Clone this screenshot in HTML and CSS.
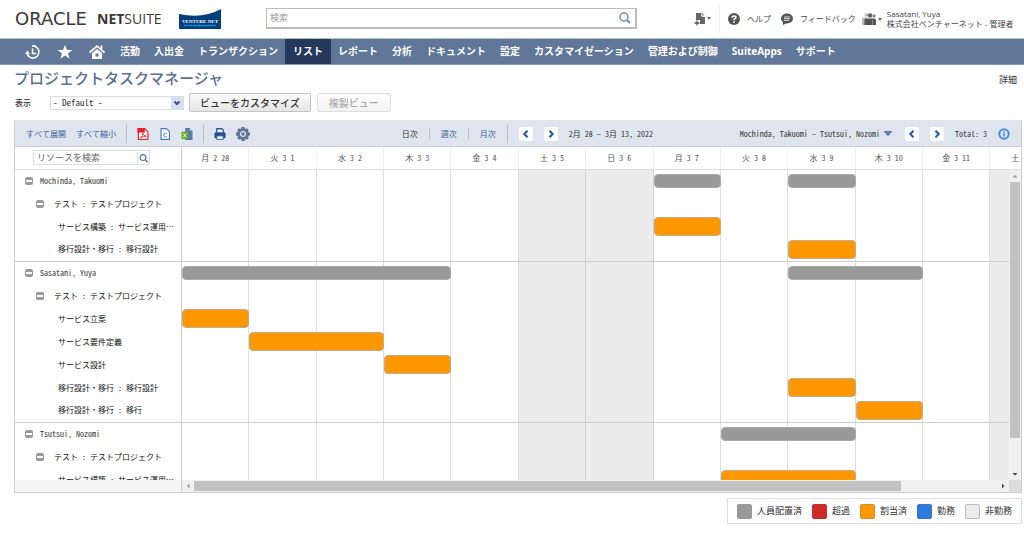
FILE: index.html
```html
<!DOCTYPE html>
<html lang="ja">
<head>
<meta charset="utf-8">
<title>プロジェクトタスクマネージャ</title>
<link rel="stylesheet" href="styles.css">
</head>
<body>
<header class="top">
  <div class="brand"><span class="oracle">ORACLE</span><span class="netsuite"><b>NET</b>SUITE</span></div>
  <svg class="venture" viewBox="0 0 42 20" role="img" aria-label="VENTURE NET">
    <path d="M0 5Q24 10 42 0V20H0Z" fill="#003e7e"/>
    <text x="21" y="14" text-anchor="middle" class="venture-name">VENTURE NET</text>
    <path d="M5 16.500H37" stroke="#1591c9" stroke-width="1.500" stroke-dasharray="3 .5 5 .5"/>
  </svg>
  <div class="search">
    <input type="text" placeholder="検索" aria-label="検索">
    <svg viewBox="0 0 12 12" class="ico12"><circle cx="5" cy="5" r="4" fill="none" stroke="#6f8bb5" stroke-width="1.500"/><path d="M8 8L11 11" stroke="#6f8bb5" stroke-width="2"/></svg>
  </div>
  <div class="tools">
    <button class="plain create" aria-label="新規作成">
      <svg viewBox="0 0 18 14" class="ico18"><path d="M2 1H7V4L9 5H11V12H6V8H2Z" fill="#666"/><path d="M7.500 0L10.500 3.500H7.500Z" fill="#888"/><path d="M3 8V14M0 11H6" stroke="#fff" stroke-width="3"/><path d="M3 8.500V13.500M.5 11H5.500" stroke="#555" stroke-width="1.300"/><path d="M13 5H17L15 8Z" fill="#666"/></svg>
    </button>
    <a class="tool" href="#"><svg viewBox="0 0 12 12" class="ico12"><circle cx="6" cy="6" r="6" fill="#555"/><path d="M4 4.700Q4 3 6 3T8 4.600Q8 5.500 6 6.300V7.300" fill="none" stroke="#fff" stroke-width="1.500"/><path d="M5.200 8.300H6.800V9.800H5.200Z" fill="#fff"/></svg>ヘルプ</a>
    <a class="tool" href="#"><svg viewBox="0 0 12 12" class="ico12"><ellipse cx="6" cy="5.500" rx="6" ry="5" fill="#555"/><path d="M2 8V12L6 10Z" fill="#555"/><path d="M3 4H9M3 5.700H9M3 7.400H8" stroke="#fff" stroke-width=".8"/></svg>フィードバック</a>
    <button class="role">
      <svg viewBox="0 0 20 13" class="ico20"><circle cx="4.500" cy="2" r="1.800" fill="#bbb"/><path d="M0 12V6Q0 4.500 2 4.500H5V12Z" fill="#bbb"/><circle cx="8" cy="2.500" r="2.300" fill="#666"/><circle cx="12" cy="3" r="1.700" fill="#888"/><path d="M2.500 12V7Q2.500 5.500 4 5.500H12Q14 5.500 14 7V12Z" fill="#555"/><path d="M10.500 7V12" stroke="#999" stroke-width=".7"/><path d="M16 5H20L18 8Z" fill="#666"/></svg>
      <span>Sasatani, Yuya<br>株式会社ベンチャーネット - 管理者</span>
    </button>
  </div>
</header>
<nav class="nav">
  <a class="navicon" href="#" aria-label="履歴"><svg viewBox="0 0 16 16"><path d="M7 2A6 6 0 1 1 2 9" fill="none" stroke="#fff" stroke-width="1.600"/><path d="M0 10L2.500 6.500L5 10Z" fill="#fff"/><path d="M7.500 4.500V9.500H11" fill="none" stroke="#fff" stroke-width="1.500"/></svg></a>
  <a class="navicon" href="#" aria-label="ショートカット"><svg viewBox="0 0 16 16"><path d="M8 1L10 6H15.300L11 9.400L12.700 14.800L8 11.600L3.300 14.800L5 9.400L.7 6H6Z" fill="#fff"/></svg></a>
  <a class="navicon" href="#" aria-label="ホーム"><svg viewBox="0 0 16 16"><path d="M.5 8.500L8 2L15.500 8.500M12.500 1.500V5" fill="none" stroke="#fff" stroke-width="1.700"/><path d="M3 9.300L8 5L13 9.300V15H3Z" fill="#fff"/><path d="M6.500 9.500H9.500V12.500H6.500Z" fill="#607799"/></svg></a>
  <a href="#">活動</a><a href="#">入出金</a><a href="#">トランザクション</a><a class="active" href="#">リスト</a><a href="#">レポート</a><a href="#">分析</a><a href="#">ドキュメント</a><a href="#">設定</a><a href="#">カスタマイゼーション</a><a href="#">管理および制御</a><a href="#">SuiteApps</a><a href="#">サポート</a>
</nav>
<main class="page">
  <div class="titlebar"><h1>プロジェクトタスクマネージャ</h1><a href="#">詳細</a></div>
  <div class="viewbar">
    <label for="view">表示</label>
    <div class="select">
      <select id="view"><option>- Default -</option></select>
      <svg viewBox="0 0 12 12" class="ico12"><path d="M0 0H12V12H0Z" fill="#d7e0f0"/><path d="M3.500 4.500L6 7L8.500 4.500" fill="none" stroke="#36558c" stroke-width="2"/></svg>
    </div>
    <button class="btn">ビューをカスタマイズ</button>
    <button class="btn" disabled>複製ビュー</button>
  </div>

  <section class="gantt">
    <div class="toolbar">
      <div class="group">
        <a href="#">すべて展開</a><a href="#">すべて縮小</a>
        <i class="sep"></i>
        <button class="plain" aria-label="PDF"><svg viewBox="0 0 12 13" class="ico12"><path d="M1 .7H8L11.300 4V12.300H1Z" fill="#fff" stroke="#ee3038" stroke-width="1.400"/><path d="M0 0H8V5H0Z" fill="#ee2028"/><path d="M3.500 10.500Q6.500 8 6 5.500Q6.500 8.500 9.500 9Q6 8.500 3.500 10.500" fill="none" stroke="#ee3038"/></svg></button>
        <button class="plain" aria-label="CSV"><svg viewBox="0 0 12 13" class="ico12"><path d="M1.700 .7H7.500L10.800 4V12.300H1.700Z" fill="#fff" stroke="#4778c0" stroke-width="1.200"/><path d="M8 6Q5 4.500 4.700 7.500T8 9" fill="none" stroke="#4778c0"/></svg></button>
        <button class="plain" aria-label="Excel"><svg viewBox="0 0 12 13" class="ico12"><path d="M4 0H9L12 3V13H4Z" fill="#5b79ad"/><path d="M9 0V3H12Z" fill="#c5d2e8"/><path d="M0 4H7V12H0Z" fill="#69ad22"/><path d="M2 6L5 10M5 6L2 10" stroke="#fff"/></svg></button>
        <i class="sep"></i>
        <button class="plain" aria-label="印刷"><svg viewBox="0 0 12 13" class="ico12"><path d="M2.500 5V.8H8L9.500 2.500V5" fill="#fff" stroke="#285294" stroke-width="1.400"/><path d="M0 6Q0 4.500 1.500 4.500H10.500Q12 4.500 12 6V11H0Z" fill="#285294"/><path d="M2.500 8.500H9.500V12.300H2.500Z" fill="#fff" stroke="#285294"/></svg></button>
        <button class="plain" aria-label="設定"><svg viewBox="0 0 14 14" class="ico14"><path d="M5.500 0H8.500L9 2L11 1.200L12.800 3L12 5L14 5.500V8.500L12 9L12.800 11L11 12.800L9 12L8.500 14H5.500L5 12L3 12.800L1.200 11L2 9L0 8.500V5.500L2 5L1.200 3L3 1.200L5 2Z" fill="#647694"/><circle cx="7" cy="7" r="2.400" fill="#647694" stroke="#dfe5ee" stroke-width="1.200"/></svg></button>
      </div>
      <i class="space-l"></i>
      <div class="group far">
        <span>日次</span><i class="sep thin"></i><a href="#">週次</a><i class="sep thin"></i><a href="#">月次</a><i class="sep"></i>
        <button class="step" aria-label="前の期間"><svg viewBox="0 0 8 8"><path d="M5.500 .7L2.300 4L5.500 7.300"/></svg></button>
        <button class="step" aria-label="次の期間"><svg viewBox="0 0 8 8"><path d="M2.500 .7L5.700 4L2.500 7.300"/></svg></button>
        <span>2月 28 – 3月 13, 2022</span>
      </div>
      <i class="space-s"></i>
      <div class="group far">
        <button class="plain range">Mochinda, Takuomi – Tsutsui, Nozomi <svg viewBox="0 0 8 5"><path d="M0 0H8V1L4 5L0 1Z" fill="#5f7fb0"/></svg></button>
        <button class="step" aria-label="前のページ"><svg viewBox="0 0 8 8"><path d="M5.500 .7L2.300 4L5.500 7.300"/></svg></button>
        <button class="step" aria-label="次のページ"><svg viewBox="0 0 8 8"><path d="M2.500 .7L5.700 4L2.500 7.300"/></svg></button>
        <span>Total: 3</span>
        <button class="plain" aria-label="情報"><svg viewBox="0 0 12 12" class="ico12"><circle cx="6" cy="6" r="4.700" fill="#d5e5fb" stroke="#4b8be0" stroke-width="2"/><path d="M6 5.300V8.500M6 3.300V4.500" stroke="#3f80d8" stroke-width="1.500"/></svg></button>
      </div>
    </div>

    <div class="head">
      <div class="find"><div class="findbox"><input type="text" placeholder="リソースを検索" aria-label="リソースを検索"><svg viewBox="0 0 12 12" class="ico12"><circle cx="5.500" cy="5.500" r="3.200" fill="none" stroke="#5478ae" stroke-width="1.300"/><path d="M8 8L10.500 10.500" stroke="#5478ae" stroke-width="1.600"/></svg></div></div>
      <div class="days"><span>月 2 28</span><span>火 3 1</span><span>水 3 2</span><span>木 3 3</span><span>金 3 4</span><span>土 3 5</span><span>日 3 6</span><span>月 3 7</span><span>火 3 8</span><span>水 3 9</span><span>木 3 10</span><span>金 3 11</span><span class="cut">土</span></div>
    </div>

    <div class="body">
      <div class="lines"><i></i><i></i><i></i><i></i><i></i><i class="off"></i><i class="off"></i><i></i><i></i><i></i><i></i><i></i><i class="off"></i></div>
      <div class="rows">
        <div class="row person"><div class="label"><button class="toggle" aria-label="折りたたむ"></button>Mochinda, Takuomi</div><div class="track"><b class="bar sum c8 w1"></b><b class="bar sum c10 w1"></b></div></div>
        <div class="row project"><div class="label"><button class="toggle" aria-label="折りたたむ"></button>テスト : テストプロジェクト</div><div class="track"></div></div>
        <div class="row task"><div class="label">サービス構築 : サービス運用…</div><div class="track"><b class="bar c8 w1"></b></div></div>
        <div class="row task last"><div class="label">移行設計・移行 : 移行設計</div><div class="track"><b class="bar c10 w1"></b></div></div>

        <div class="row person"><div class="label"><button class="toggle" aria-label="折りたたむ"></button>Sasatani, Yuya</div><div class="track"><b class="bar sum c1 w4"></b><b class="bar sum c10 w2"></b></div></div>
        <div class="row project"><div class="label"><button class="toggle" aria-label="折りたたむ"></button>テスト : テストプロジェクト</div><div class="track"></div></div>
        <div class="row task"><div class="label">サービス立案</div><div class="track"><b class="bar c1 w1"></b></div></div>
        <div class="row task"><div class="label">サービス要件定義</div><div class="track"><b class="bar c2 w2"></b></div></div>
        <div class="row task"><div class="label">サービス設計</div><div class="track"><b class="bar c4 w1"></b></div></div>
        <div class="row task"><div class="label">移行設計・移行 : 移行設計</div><div class="track"><b class="bar c10 w1"></b></div></div>
        <div class="row task last"><div class="label">移行設計・移行 : 移行</div><div class="track"><b class="bar c11 w1"></b></div></div>

        <div class="row person"><div class="label"><button class="toggle" aria-label="折りたたむ"></button>Tsutsui, Nozomi</div><div class="track"><b class="bar sum c9 w2"></b></div></div>
        <div class="row project"><div class="label"><button class="toggle" aria-label="折りたたむ"></button>テスト : テストプロジェクト</div><div class="track"></div></div>
        <div class="row task"><div class="label">サービス構築 : サービス運用…</div><div class="track"><b class="bar c9 w2"></b></div></div>
      </div>
      <div class="vscroll"><svg viewBox="0 0 12 12"><path d="M3.500 7.500L6 5L8.500 7.500Z" fill="#999"/></svg><i class="thumb"></i><i class="rest"></i><svg viewBox="0 0 12 12"><path d="M3.500 5L6 7.500L8.500 5Z" fill="#444"/></svg></div>
    </div>
    <div class="hscroll"><div class="under"></div><svg viewBox="0 0 12 12"><path d="M7.500 3.500L5 6L7.500 8.500Z" fill="#999"/></svg><i class="thumb"></i><i class="rest"></i><svg viewBox="0 0 12 12"><path d="M5 3.500L7.500 6L5 8.500Z" fill="#444"/></svg><i class="corner"></i></div>
  </section>

  <ul class="legend">
    <li><i class="gray"></i>人員配置済</li><li><i class="red"></i>超過</li><li><i class="orange"></i>割当済</li><li><i class="blue"></i>勤務</li><li><i class="light"></i>非勤務</li>
  </ul>
</main>
</body>
</html>
```
FILE: styles.css
```css
* { box-sizing: border-box; }
body {
  margin: 0; height: 100vh; display: flex; flex-direction: column; background: #fff; color: #333;
  font: 8px/12px "Noto Sans Mono CJK JP", "Noto Sans CJK JP", sans-serif;
}
a { color: inherit; text-decoration: none; }
button, input, select { font: inherit; color: inherit; margin: 0; padding: 0; border-radius: 0; }
button { cursor: pointer; }
svg { display: block; flex: none; }
.ico12 { width: 12px; height: 12px; }
.ico14 { width: 14px; height: 14px; }
.ico18 { width: 18px; height: 14px; }
.ico20 { width: 20px; height: 13px; }
.plain { border: 0; background: none; display: flex; align-items: center; }

.top { height: 38px; display: flex; align-items: center; padding-left: 15px; flex: none; font-family: "Open Sans", "Noto Sans CJK JP", sans-serif; }
.brand { width: 164px; display: flex; align-items: center; color: #3b3733; line-height: 20px; }
.oracle { font-family: "DejaVu Sans", sans-serif; font-size: 18px; width: 82px; }
.netsuite { font-family: "Open Sans", sans-serif; font-size: 14px; }
.venture { width: 42px; height: 20px; }
.venture-name { font: bold 5px "Liberation Serif", serif; fill: #fff; }
.search { margin-left: 45px; flex: 0 1 371px; height: 21px; margin-bottom: 2px; border: 1px solid #bbb; border-width: 1px 2px 2px 1px; display: flex; align-items: center; padding: 0 4px 0 3px; }
.search input { flex: 1; min-width: 0; border: 0; outline: 0; font-size: 9px; }
.search input::placeholder { color: #999; }
.tools { margin-left: auto; display: flex; align-items: center; width: 330px; color: #444; }
.create { padding-right: 7px; height: 28px; border-right: 1px solid #eee; margin-right: 8px; }
.tool { display: flex; align-items: center; gap: 7px; margin-right: 10px; white-space: nowrap; }
.tool + .role { margin-left: -4px; }
.role { border: 0; background: none; display: flex; align-items: center; gap: 5px; text-align: left; line-height: 10px; white-space: nowrap; }

.nav { height: 27px; flex: none; background: #607799; border-top: 1px solid #b4c0d2; border-bottom: 1px solid #8496b0; display: flex; align-items: stretch; padding-left: 17px; color: #fff; font: bold 10px/25px "Open Sans", "Noto Sans CJK JP", sans-serif; }
.nav a { padding: 0 7px; white-space: nowrap; }
.nav .navicon { width: 32px; padding: 0 8px; display: flex; align-items: center; }
.navicon svg { width: 16px; height: 16px; }
.nav .active { background: #24385b; padding: 0 8px; }

.page { flex: 1; min-height: 0; display: flex; flex-direction: column; padding: 0 2px 11px 14px; }
.titlebar { height: 28px; flex: none; display: flex; align-items: center; justify-content: space-between; padding: 2px 5px 0 0; font-size: 9px; }
.titlebar h1 { margin: 0 0 4px; font: 500 15px/20px "Noto Sans CJK JP", sans-serif; color: #5a6f93; }
.viewbar { height: 27px; flex: none; display: flex; align-items: center; padding-bottom: 8px; }
.viewbar label { width: 36px; font-family: "Noto Sans CJK JP", sans-serif; font-weight: 500; padding-left: 1px; }
.select { position: relative; width: 134px; height: 14px; border: 1px solid #ddd; margin-right: 5px; }
.select select { appearance: none; border: 0; outline: 0; background: #fff; width: 100%; height: 12px; padding-left: 2px; font-size: 9px; }
.select svg { position: absolute; right: 0; top: 0; pointer-events: none; }
.btn { height: 19px; border: 1px solid #c4c4c4; border-radius: 2px; background: linear-gradient(#fafafa, #e6e6e6); font: 500 10px/16px "Noto Sans CJK JP", sans-serif; padding: 0 10px; margin-right: 6px; white-space: nowrap; }
.btn:disabled { color: #aaa; border-color: #ddd; background: linear-gradient(#fff, #f2f2f2); padding: 0 11px; }

.gantt { flex: 1; min-height: 0; display: flex; flex-direction: column; border: 1px solid #ccc; border-top-color: #dfe5ee; }
.toolbar { height: 26px; flex: none; background: #dfe5ee; border-bottom: 1px solid #ccc; display: flex; align-items: center; padding: 0 11px; white-space: nowrap; }
.group { display: flex; align-items: center; gap: 10px; }
.group.far { gap: 11px; }
.group a { color: #3a5f9a; }
.space-l { flex: 7; }
.space-s { flex: 4; }
.sep { width: 1px; height: 19px; background: #b9bec8; }
.sep.thin { height: 11px; }
.step { width: 14px; height: 14px; border: 0; border-radius: 2px; background: #fff; display: flex; align-items: center; justify-content: center; }
.step svg { width: 8px; height: 8px; fill: none; stroke: #2457a0; stroke-width: 2; }
.range { gap: 4px; margin-right: 2px; }
.range svg { width: 8px; height: 5px; }

.head { height: 23px; flex: none; display: flex; border-bottom: 1px solid #ddd; }
.find { width: 167px; flex: none; border-right: 1px solid #ccc; padding: 3px 0 0 18px; }
.findbox { width: 117px; height: 15px; border: 1px solid #ddd; display: flex; align-items: center; padding-left: 3px; }
.findbox input { flex: 1; min-width: 0; border: 0; outline: 0; font-size: 9px; line-height: 12px; }
.findbox input::placeholder { color: #666; }
.findbox svg { border-left: 1px solid #ddd; }
.days, .lines, .track { display: grid; grid-template-columns: repeat(13, 8.03%); }
.days { flex: 1; min-width: 0; overflow: hidden; text-align: center; line-height: 21px; color: #555; }
.days span { border-right: 1px solid #eee; white-space: nowrap; }
.days .cut { text-align: left; padding-left: 21px; border-right: 0; }

.body { flex: 1; min-height: 0; position: relative; overflow: hidden; }
.lines { position: absolute; inset: 0 0 0 167px; overflow: hidden; }
.lines i { border-right: 1px solid #ddd; }
.lines .off { background: #ececec; border-color: #d2d2d2; }
.rows { position: relative; }
.row { display: flex; height: 23px; }
.last { border-bottom: 1px solid #ccc; }
.label { width: 167px; flex: none; border-right: 1px solid #ccc; display: flex; align-items: center; padding-bottom: 2px; white-space: nowrap; overflow: hidden; }
.person .label { padding-left: 10px; gap: 7px; }
.project .label { padding-left: 21px; gap: 10px; color: #111; }
.task .label { padding-left: 43px; color: #111; }
.toggle { width: 8px; height: 8px; flex: none; border: 0; border-radius: 2px; background: linear-gradient(#fff, #fff) center / 6px 2px no-repeat #999; }
.track { flex: 1; min-width: 0; grid-template-rows: 23px; }
.bar { height: 19px; margin-top: 1px; background: #ff9800; border: 1px solid #c0ab8c; border-radius: 4px; grid-row: 1; }
.bar.sum { height: 14px; margin-top: 4px; background: #999; border-color: #a9a9a9; }
.c1 { grid-column-start: 1; }
.c2 { grid-column-start: 2; }
.c4 { grid-column-start: 4; }
.c8 { grid-column-start: 8; }
.c9 { grid-column-start: 9; }
.c10 { grid-column-start: 10; }
.c11 { grid-column-start: 11; }
.w1 { grid-column-end: span 1; }
.w2 { grid-column-end: span 2; }
.w4 { grid-column-end: span 4; }

.vscroll { position: absolute; right: 0; top: 0; bottom: 0; width: 12px; background: #f0f0f0; display: flex; flex-direction: column; }
.vscroll svg, .hscroll svg { width: 12px; height: 12px; }
.vscroll .thumb { flex: 26; margin: 0 1px; background: #c1c1c1; }
.vscroll .rest { flex: 3; }
.hscroll { height: 12px; flex: none; display: flex; background: #f0f0f0; }
.hscroll .under { width: 167px; flex: none; border-right: 1px solid #ccc; background: #f5f5f5; }
.hscroll .thumb { flex: 88; margin: 1px 0; background: #c1c1c1; }
.hscroll .rest { flex: 12; }
.hscroll .corner { width: 12px; background: #dcdcdc; }

.legend { align-self: flex-end; flex: none; list-style: none; margin: 5px 0 0; padding: 0 9px; height: 26px; border: 1px solid #ddd; display: flex; align-items: center; gap: 10px; font-size: 9px; white-space: nowrap; }
.legend li { display: flex; align-items: center; gap: 5px; }
.legend i { width: 15px; height: 15px; border-radius: 2px; border: 1px solid #bbb; }
.legend .gray { background: #999; border-color: #999; }
.legend .red { background: #d02a27; border-color: #b33; }
.legend .orange { background: #ff9800; border-color: #d09030; }
.legend .blue { background: #2c7be0; border-color: #4676b5; }
.legend .light { background: #ececec; }
```
